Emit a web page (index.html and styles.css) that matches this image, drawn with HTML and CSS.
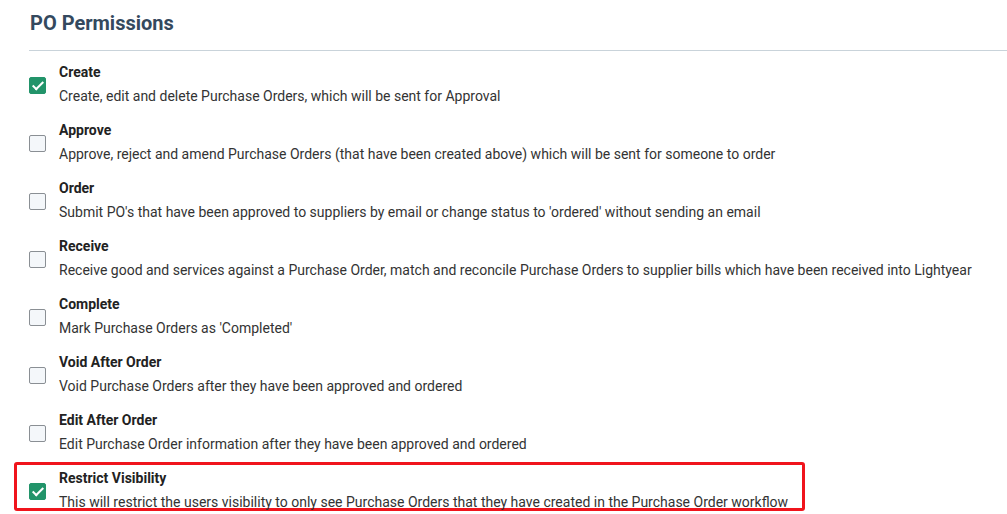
FILE: index.html
```html
<!DOCTYPE html>
<html lang="en">
<head>
    <meta charset="UTF-8">
    <title>PO Permissions</title>
    <link rel="stylesheet" href="styles.css">
</head>
<body>
    <div class="panel">
        <h2 class="panel-title">PO Permissions</h2>

        <ul class="perm-list">
            <li class="perm">
                <span class="check checked"></span>
                <div class="perm-text">
                    <div class="perm-name">Create</div>
                    <div class="perm-desc">Create, edit and delete Purchase Orders, which will be sent for Approval</div>
                </div>
            </li>
            <li class="perm">
                <span class="check"></span>
                <div class="perm-text">
                    <div class="perm-name">Approve</div>
                    <div class="perm-desc">Approve, reject and amend Purchase Orders (that have been created above) which will be sent for someone to order</div>
                </div>
            </li>
            <li class="perm">
                <span class="check"></span>
                <div class="perm-text">
                    <div class="perm-name">Order</div>
                    <div class="perm-desc">Submit PO's that have been approved to suppliers by email or change status to 'ordered' without sending an email</div>
                </div>
            </li>
            <li class="perm">
                <span class="check"></span>
                <div class="perm-text">
                    <div class="perm-name">Receive</div>
                    <div class="perm-desc">Receive good and services against a Purchase Order, match and reconcile Purchase Orders to supplier bills which have been received into Lightyear</div>
                </div>
            </li>
            <li class="perm">
                <span class="check"></span>
                <div class="perm-text">
                    <div class="perm-name">Complete</div>
                    <div class="perm-desc">Mark Purchase Orders as 'Completed'</div>
                </div>
            </li>
            <li class="perm">
                <span class="check"></span>
                <div class="perm-text">
                    <div class="perm-name">Void After Order</div>
                    <div class="perm-desc">Void Purchase Orders after they have been approved and ordered</div>
                </div>
            </li>
            <li class="perm">
                <span class="check"></span>
                <div class="perm-text">
                    <div class="perm-name">Edit After Order</div>
                    <div class="perm-desc">Edit Purchase Order information after they have been approved and ordered</div>
                </div>
            </li>
            <li class="perm highlight">
                <span class="check checked"></span>
                <div class="perm-text">
                    <div class="perm-name">Restrict Visibility</div>
                    <div class="perm-desc">This will restrict the users visibility to only see Purchase Orders that they have created in the Purchase Order workflow</div>
                </div>
            </li>
        </ul>
    </div>
</body>
</html>
```

FILE: styles.css
```css
/* Reset */
* {
    margin: 0;
    padding: 0;
    box-sizing: border-box;
}

body {
    font-family: Roboto, 'Liberation Sans', sans-serif;
    background: #fff;
    color: #333;
    overflow: hidden;
}

/* Panel */
.panel {
    padding: 10px 0 0 29px;
}

.panel-title {
    font-size: 20px;
    font-weight: 700;
    color: #34495e;
    padding-left: 1px;
    line-height: 26px;
    padding-bottom: 14px;
    border-bottom: 1px solid #c9d3da;
}

/* Permission list */
.perm-list {
    list-style: none;
    padding-top: 6px;
}

.perm {
    display: flex;
    align-items: flex-start;
    gap: 13px;
    height: 58px;
    padding-top: 5px;
}

.perm-name {
    font-size: 14px;
    font-weight: 700;
    color: #222;
    line-height: 20px;
}

.perm-desc {
    font-size: 14px;
    color: #333;
    line-height: 20px;
    margin-top: 4px;
}

/* Checkbox */
.check {
    width: 17px;
    height: 17px;
    flex: none;
    border: 1px solid #8a8f94;
    border-radius: 2px;
    background: #f4f7fa;
    margin-top: 15px;
    position: relative;
}

.check.checked {
    background: #22946a;
    border-color: #22946a;
}

.check.checked::after {
    content: "";
    position: absolute;
    left: 5px;
    top: 1px;
    width: 4px;
    height: 9px;
    border: solid #fff;
    border-width: 0 2px 2px 0;
    transform: rotate(45deg);
}

/* Highlighted row */
.highlight {
    margin-left: -15px;
    margin-top: -1px;
    padding-left: 12px;
    padding-top: 3px;
    width: 791px;
    height: 49px;
    border: 3px solid #f0141c;
    border-radius: 3px;
}
```
